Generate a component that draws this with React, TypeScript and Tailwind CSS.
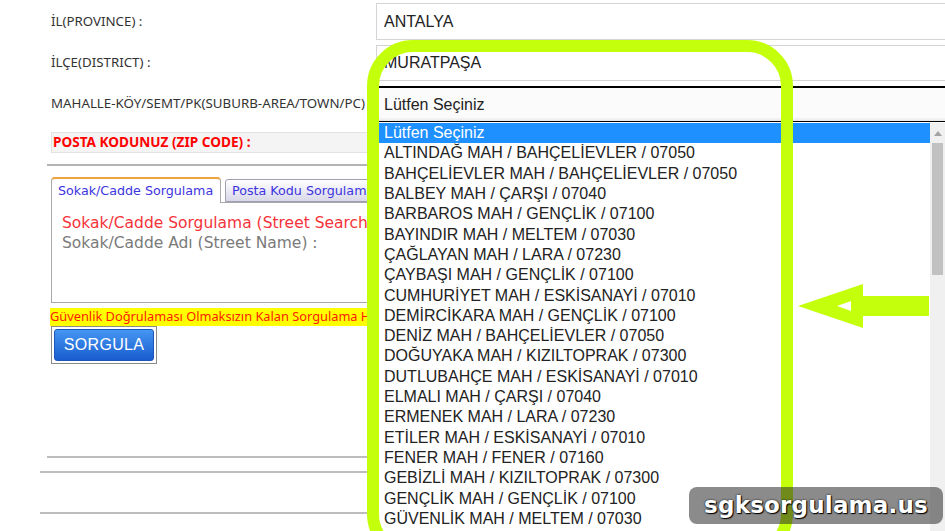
const mahalleler = [
  "ALTINDAĞ MAH / BAHÇELİEVLER / 07050",
  "BAHÇELİEVLER MAH / BAHÇELİEVLER / 07050",
  "BALBEY MAH / ÇARŞI / 07040",
  "BARBAROS MAH / GENÇLİK / 07100",
  "BAYINDIR MAH / MELTEM / 07030",
  "ÇAĞLAYAN MAH / LARA / 07230",
  "ÇAYBAŞI MAH / GENÇLİK / 07100",
  "CUMHURİYET MAH / ESKİSANAYİ / 07010",
  "DEMİRCİKARA MAH / GENÇLİK / 07100",
  "DENİZ MAH / BAHÇELİEVLER / 07050",
  "DOĞUYAKA MAH / KIZILTOPRAK / 07300",
  "DUTLUBAHÇE MAH / ESKİSANAYİ / 07010",
  "ELMALI MAH / ÇARŞI / 07040",
  "ERMENEK MAH / LARA / 07230",
  "ETİLER MAH / ESKİSANAYİ / 07010",
  "FENER MAH / FENER / 07160",
  "GEBİZLİ MAH / KIZILTOPRAK / 07300",
  "GENÇLİK MAH / GENÇLİK / 07100",
  "GÜVENLİK MAH / MELTEM / 07030",
];

function FieldRow({
  label,
  value,
  className,
  boxClass,
}: {
  label: string;
  value: string;
  className: string;
  boxClass: string;
}) {
  return (
    <div className={`flex items-stretch ${className}`}>
      <div className="w-[376px] shrink-0 pl-[51px] flex items-center text-[13.3px] text-[#333] font-['Noto_Sans',sans-serif] whitespace-nowrap">
        {label}
      </div>
      <div
        className={`w-[590px] shrink-0 flex items-center pl-[7px] text-[16px] text-[#222] font-['Liberation_Sans',Arial,sans-serif] ${boxClass}`}
      >
        {value}
      </div>
    </div>
  );
}

export default function App() {
  return (
    <div className="relative w-[945px] h-[531px] overflow-hidden bg-white">
      {/* üst alanlar */}
      <FieldRow
        label="İL(PROVINCE) :"
        value="ANTALYA"
        className="mt-[3px] h-[37px]"
        boxClass="border border-[#d4d4d4]"
      />
      <FieldRow
        label="İLÇE(DISTRICT) :"
        value="MURATPAŞA"
        className="mt-[5px] h-[36px]"
        boxClass="border border-[#d4d4d4]"
      />
      <FieldRow
        label="MAHALLE-KÖY/SEMT/PK(SUBURB-AREA/TOWN/PC)"
        value="Lütfen Seçiniz"
        className="mt-[5px] h-[36px]"
        boxClass="border border-black border-t-2 bg-[#fbfbfb] shadow-[inset_0_-2px_3px_rgba(0,0,0,0.08)]"
      />

      <div className="flex">
        {/* sol taraf */}
        <div className="w-[378px] shrink-0 overflow-hidden">
          <div className="ml-[51px] mt-[10px] h-[21px] w-[340px] bg-[#f4f4f4] border border-[#e2e2e2] flex items-center pl-[1px] text-[13.6px] font-bold text-[#ff0000] font-['Noto_Sans',sans-serif]">
            POSTA KODUNUZ (ZIP CODE) :
          </div>
          <div className="ml-[47px] mt-[11px] h-[2px] w-[340px] bg-[#b4b4b4]" />

          <div className="ml-[51px] mt-[11px] w-[360px] flex items-end gap-[4px] font-['DejaVu_Sans',Verdana,sans-serif] text-[12.7px] text-[#3d34e0] whitespace-nowrap">
            <div className="w-[170px] shrink-0 h-[26px] bg-white border border-[#a8a8a8] border-t-2 border-t-[#f0a23c] border-b-0 rounded-t-[4px] flex items-center pl-[6px] -mb-[1px] relative z-10">
              Sokak/Cadde Sorgulama
            </div>
            <div className="w-[170px] shrink-0 h-[23px] bg-gradient-to-b from-white to-[#d8d8e8] border border-[#a0a0b4] rounded-t-[3px] flex items-center pl-[6px]">
              Posta Kodu Sorgulama
            </div>
          </div>
          <div className="ml-[51px] h-[101px] w-[340px] border border-[#a8a8a8] pl-[10px] pt-[10px] font-['DejaVu_Sans',Verdana,sans-serif] text-[15.5px] leading-[20px] whitespace-nowrap">
            <div className="text-[#f5333a]">Sokak/Cadde Sorgulama (Street Search)</div>
            <div className="text-[#7a7a7a]">Sokak/Cadde Adı (Street Name) :</div>
          </div>

          <div className="ml-[50px] mt-[5px] h-[18px] w-[340px] bg-[#ffff00] flex items-center text-[12.8px] text-[#ff1a00] whitespace-nowrap font-['Noto_Sans',sans-serif]">
            Güvenlik Doğrulaması Olmaksızın Kalan Sorgulama Hakkınız
          </div>
          <div className="ml-[51px] w-[106px] h-[38px] border border-[#8a8a8a] p-[2px]">
            <button className="w-full h-full rounded-[3px] bg-gradient-to-b from-[#4596f2] to-[#1a5ccf] border border-[#1d56b8] text-white text-[16px] font-['Liberation_Sans',Arial,sans-serif] tracking-[0.3px]">
              SORGULA
            </button>
          </div>

          <div className="ml-[47px] mt-[92px] h-[2px] w-[340px] bg-[#bdbdbd]" />
          <div className="ml-[40px] mt-[13px] h-[2px] w-[340px] bg-[#bdbdbd]" />
          <div className="ml-[40px] mt-[39px] h-[2px] w-[340px] bg-[#bdbdbd]" />
        </div>

        {/* açılır liste */}
        <div className="flex-1 flex mt-[1px] bg-white font-['Liberation_Sans',Arial,sans-serif] text-[16px] text-[#222]">
          <div className="flex-1">
            <div className="h-[20.3px] bg-[#1e90ff] text-white flex items-center pl-[6px]">
              Lütfen Seçiniz
            </div>
            {mahalleler.map((m) => (
              <div key={m} className="h-[20.3px] flex items-center pl-[6px] whitespace-nowrap">
                {m}
              </div>
            ))}
          </div>
          <div className="w-[15px] h-[420px] bg-[#f0f0f0] flex flex-col items-center">
            <div className="h-[20px] flex items-center justify-center">
              <svg width="8" height="5" viewBox="0 0 8 5">
                <path d="M0 5 L4 0 L8 5 Z" fill="#a3a3a3" />
              </svg>
            </div>
            <div className="w-[11px] h-[132px] bg-[#c1c1c1]" />
          </div>
        </div>
      </div>

      {/* yeşil çerçeve */}
      <div className="absolute left-[367px] top-[40px] w-[426px] h-[520px] border-[12px] border-[#c4ff0b] rounded-[46px] pointer-events-none" />

      {/* ok */}
      <svg
        className="absolute left-0 top-0 pointer-events-none"
        width="945"
        height="531"
        viewBox="0 0 945 531"
      >
        <path
          fillRule="evenodd"
          fill="#c4ff0b"
          d="M798 306 L863 284 L863 296 L929 296 L929 316 L863 316 L863 328 Z M837 306 L851 301 L851 311 Z"
        />
      </svg>

      {/* filigran */}
      <div className="absolute left-[689px] top-[487px] w-[254px] h-[37px] rounded-[8px] bg-[rgba(40,40,40,0.54)] flex items-center justify-center">
        <span className="text-white font-bold text-[23px] font-['DejaVu_Sans',Verdana,sans-serif] [text-shadow:1px_1px_1px_#000,0_0_2px_#000] tracking-[0.2px]">
          sgksorgulama.us
        </span>
      </div>
    </div>
  );
}
